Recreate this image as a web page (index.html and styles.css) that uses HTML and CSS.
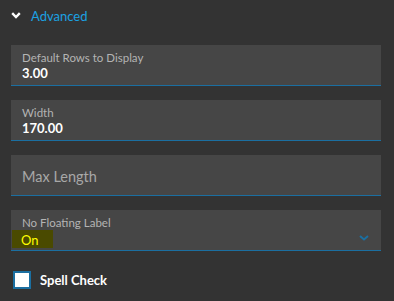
FILE: index.html
```html
<!DOCTYPE html>
<html lang="en">
<head>
    <meta charset="UTF-8">
    <title>Advanced</title>
    <link rel="stylesheet" href="styles.css">
</head>
<body>
    <div class="panel">
        <div class="section-head">
            <svg class="head-chevron" width="10" height="7" viewBox="0 0 10 7"><path d="M1.2 1.2 L5 5 L8.8 1.2" fill="none" stroke="#fff" stroke-width="2.4"/></svg>
            <span class="head-title">Advanced</span>
        </div>

        <div class="field">
            <div class="field-label">Default Rows to Display</div>
            <div class="field-value">3.00</div>
        </div>

        <div class="field">
            <div class="field-label">Width</div>
            <div class="field-value">170.00</div>
        </div>

        <div class="field field-empty">
            <div class="field-placeholder">Max Length</div>
        </div>

        <div class="field field-select">
            <div class="field-label">No Floating Label</div>
            <div class="select-row">
                <span class="select-mark">On</span>
                <svg class="select-chevron" width="10" height="6" viewBox="0 0 10 6"><path d="M1 1 L5 4.5 L9 1" fill="none" stroke="#1b6fa1" stroke-width="2"/></svg>
            </div>
        </div>

        <label class="check">
            <span class="check-box"></span>
            <span class="check-text">Spell Check</span>
        </label>
    </div>
</body>
</html>
```

FILE: styles.css
```css
* {
    padding: 0;
    margin: 0;
    box-sizing: border-box;
}

body {
    background: #333333;
    font-family: Lato, "Open Sans", sans-serif;
    color: #fff;
}

.panel {
    width: 394px;
    height: 301px;
    padding: 0 13px 0 11px;
}

.section-head {
    display: flex;
    align-items: center;
    height: 31px;
}

.head-chevron {
    margin: 0 10px 0 0;
}

.head-title {
    color: #1ba1e2;
    font-size: 13px;
}

.field {
    height: 41px;
    margin-top: 14px;
    background: #464646;
    border-bottom: 1px solid #1b6fa1;
    padding: 5px 11px 0 11px;
}

.field-label {
    font-size: 11.5px;
    line-height: 15px;
    color: #b4b4b4;
}

.field-value {
    font-size: 13px;
    line-height: 16px;
    font-weight: bold;
    color: #fff;
}

.field-empty {
    display: flex;
    align-items: center;
    padding-top: 2px;
}

.field-placeholder {
    font-size: 14.5px;
    color: #a8a8a8;
}

.field-select {
    padding-left: 0;
}

.field-select .field-label {
    padding-left: 11px;
}

.select-row {
    display: flex;
    align-items: center;
    justify-content: space-between;
    margin-top: 0;
    padding-left: 1px;
}

.select-mark {
    display: block;
    width: 41px;
    height: 18px;
    line-height: 20px;
    padding-left: 9px;
    background: #4a4a00;
    color: #ffff00;
    font-size: 13px;
}

.select-chevron {
    margin: -2px 1px 0 0;
}

.check {
    display: flex;
    align-items: center;
    margin-top: 20px;
    padding-left: 2px;
}

.check-box {
    width: 18px;
    height: 18px;
    background: #fff;
    border: 2px solid #1b6fa1;
}

.check-text {
    margin-left: 9px;
    font-size: 13px;
    font-weight: bold;
    color: #fff;
}
```
